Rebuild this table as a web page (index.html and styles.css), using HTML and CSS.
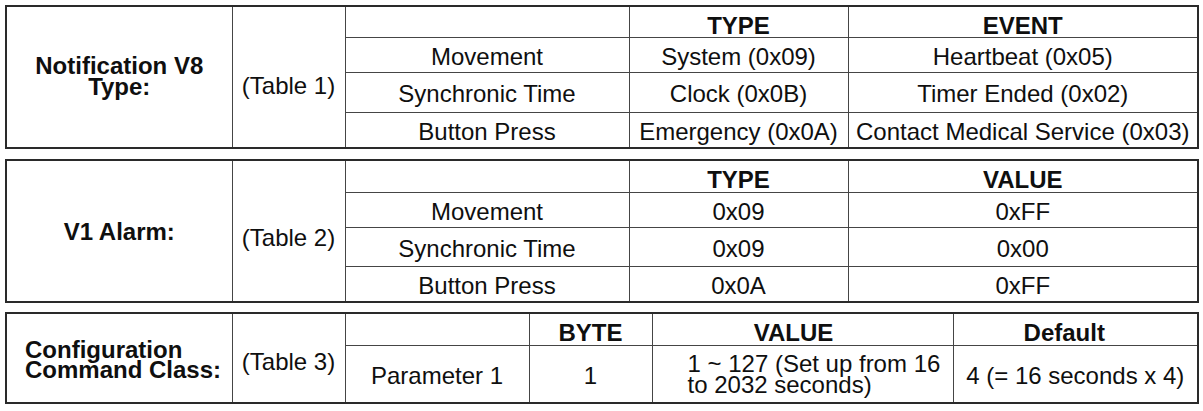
FILE: index.html
```html
<!DOCTYPE html>
<html lang="en">
<head>
<meta charset="utf-8">
<title>Notification tables</title>
<link rel="stylesheet" href="styles.css">
</head>
<body>
<div class="page">
  <table class="spec t1">
    <colgroup>
      <col class="c-label"><col class="c-ref"><col class="c-name"><col class="c-type"><col class="c-event">
    </colgroup>
    <tr class="r-head">
      <td class="label label-top" rowspan="4">Notification V8<br>Type:</td>
      <td class="ref ref1" rowspan="4">(Table 1)</td>
      <td></td>
      <th>TYPE</th>
      <th>EVENT</th>
    </tr>
    <tr class="r-a"><td>Movement</td><td>System (0x09)</td><td>Heartbeat (0x05)</td></tr>
    <tr class="r-b"><td>Synchronic Time</td><td>Clock (0x0B)</td><td>Timer Ended (0x02)</td></tr>
    <tr class="r-c"><td>Button Press</td><td>Emergency (0x0A)</td><td>Contact Medical Service (0x03)</td></tr>
  </table>

  <table class="spec t2">
    <colgroup>
      <col class="c-label"><col class="c-ref"><col class="c-name"><col class="c-type"><col class="c-event">
    </colgroup>
    <tr class="r-head">
      <td class="label" rowspan="4">V1 Alarm:</td>
      <td class="ref ref2" rowspan="4">(Table 2)</td>
      <td></td>
      <th>TYPE</th>
      <th>VALUE</th>
    </tr>
    <tr class="r-a"><td>Movement</td><td>0x09</td><td>0xFF</td></tr>
    <tr class="r-b"><td>Synchronic Time</td><td>0x09</td><td>0x00</td></tr>
    <tr class="r-c"><td>Button Press</td><td>0x0A</td><td>0xFF</td></tr>
  </table>

  <table class="spec t3">
    <colgroup>
      <col class="c-label"><col class="c-ref"><col class="c-param"><col class="c-byte"><col class="c-value"><col class="c-default">
    </colgroup>
    <tr class="r-head">
      <td class="label label-left" rowspan="2">Configuration<br>Command Class:</td>
      <td class="ref ref3" rowspan="2">(Table 3)</td>
      <td></td>
      <th>BYTE</th>
      <th class="h-value">VALUE</th>
      <th class="h-default">Default</th>
    </tr>
    <tr class="r-param">
      <td>Parameter 1</td>
      <td>1</td>
      <td class="range">1 ~ 127 (Set up from 16<br>to 2032 seconds)</td>
      <td>4 (= 16 seconds x 4)</td>
    </tr>
  </table>
</div>
</body>
</html>
```

FILE: styles.css
```css
html, body {
  margin: 0;
  padding: 0;
  background: #ffffff;
}

.page {
  padding: 5px 0 0 5px;
  display: flex;
  flex-direction: column;
}

.t2 { margin-top: 10px; }
.t3 { margin-top: 9px; }

.spec {
  width: 1194px;
  table-layout: fixed;
  border-collapse: collapse;
  border: 2px solid #2a2a2a;
  font-family: "Liberation Sans", Arial, sans-serif;
  font-size: 24px;
  color: #0f0f0f;
}

.spec td,
.spec th {
  border: 1.5px solid #454545;
  padding: 4px 0 0 0;
  text-align: center;
  vertical-align: middle;
  white-space: nowrap;
  line-height: 24px;
}

.spec th {
  font-weight: bold;
  padding-top: 8px;
  line-height: 20px;
}

.c-label { width: 226px; }
.c-ref { width: 113px; }
.c-name { width: 284px; }
.c-type { width: 219px; }
.c-event { width: 350px; }
.c-param { width: 184px; }
.c-byte { width: 123px; }
.c-value { width: 301px; }
.c-default { width: 245px; }

.r-head { height: 31px; }
.r-a { height: 35px; }
.r-b { height: 40px; }
.r-c { height: 36px; }
.t2 .r-head { height: 32px; }
.t2 .r-b { height: 39px; }
.t3 .r-head { height: 32px; }
.r-param { height: 58px; }

.spec .label {
  font-weight: bold;
  line-height: 21px;
  padding-top: 0;
}

.spec .label-top {
  padding-bottom: 3px;
}

.spec .label-left {
  text-align: left;
  padding-left: 18px;
  padding-top: 4px;
  line-height: 20px;
}

.spec .ref1 { padding-top: 18px; }
.spec .ref2 { padding-top: 14px; }
.spec .ref3 { padding-top: 8px; }

.spec .h-value { padding-right: 18px; }
.spec .h-default { padding-right: 22px; }

.spec .range {
  text-align: left;
  padding-left: 35px;
  padding-top: 0;
  line-height: 21px;
}
```
